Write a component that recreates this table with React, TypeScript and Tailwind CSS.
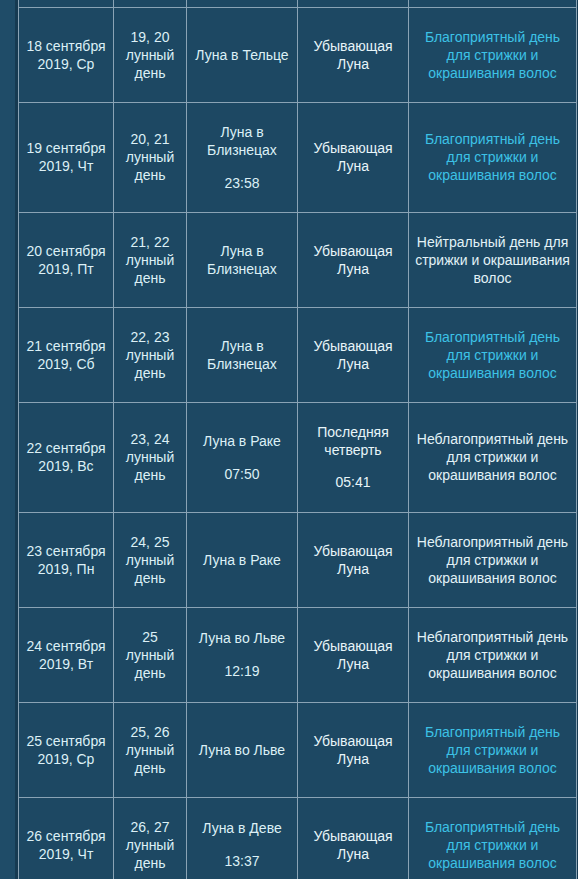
type Row = {
  date: string[];
  days: string;
  moon: string;
  moonTime?: string;
  phase: string[];
  phaseTime?: string;
  verdict: "good" | "bad" | "neutral";
  tall?: boolean;
};

const rows: Row[] = [
  { date: ["18 сентября", "2019, Ср"], days: "19, 20", moon: "Луна в Тельце", phase: ["Убывающая", "Луна"], verdict: "good" },
  { date: ["19 сентября", "2019, Чт"], days: "20, 21", moon: "Луна в Близнецах", moonTime: "23:58", phase: ["Убывающая", "Луна"], verdict: "good", tall: true },
  { date: ["20 сентября", "2019, Пт"], days: "21, 22", moon: "Луна в Близнецах", phase: ["Убывающая", "Луна"], verdict: "neutral" },
  { date: ["21 сентября", "2019, Сб"], days: "22, 23", moon: "Луна в Близнецах", phase: ["Убывающая", "Луна"], verdict: "good" },
  { date: ["22 сентября", "2019, Вс"], days: "23, 24", moon: "Луна в Раке", moonTime: "07:50", phase: ["Последняя", "четверть"], phaseTime: "05:41", verdict: "bad", tall: true },
  { date: ["23 сентября", "2019, Пн"], days: "24, 25", moon: "Луна в Раке", phase: ["Убывающая", "Луна"], verdict: "bad" },
  { date: ["24 сентября", "2019, Вт"], days: "25", moon: "Луна во Льве", moonTime: "12:19", phase: ["Убывающая", "Луна"], verdict: "bad" },
  { date: ["25 сентября", "2019, Ср"], days: "25, 26", moon: "Луна во Льве", phase: ["Убывающая", "Луна"], verdict: "good" },
  { date: ["26 сентября", "2019, Чт"], days: "26, 27", moon: "Луна в Деве", moonTime: "13:37", phase: ["Убывающая", "Луна"], verdict: "good" },
];

const cell = "border border-[#8aa3b5] px-[5px] py-[18px] text-center align-middle";

function Verdict({ kind }: { kind: Row["verdict"] }) {
  if (kind === "neutral") {
    return <span className="text-[#e2f2f7]">Нейтральный день для стрижки и окрашивания волос</span>;
  }
  if (kind === "bad") {
    return (
      <span className="text-[#e2f2f7]">
        Неблагоприятный день для стрижки и окрашивания волос
      </span>
    );
  }
  return (
    <span className="text-[#3cc2e6]">
      Благоприятный день для стрижки и окрашивания волос
    </span>
  );
}

export default function App() {
  return (
    <div
      className="min-h-screen w-[578px] h-[879px] overflow-hidden bg-[#1d4863] flex text-[14px] leading-[18px] text-[#dcf0f6]"
      style={{ fontFamily: '"Liberation Sans", Arial, sans-serif' }}
    >
      {/* left page edge */}
      <div className="w-[15px] shrink-0 bg-[#1f4c68]" />
      <div className="w-[3px] shrink-0 bg-[#163a51]" />

      <table className="table-fixed border-collapse w-[558px] shrink-0 self-start">
        <colgroup>
          <col className="w-[95px]" />
          <col className="w-[73px]" />
          <col className="w-[111px]" />
          <col className="w-[111px]" />
          <col className="w-[168px]" />
        </colgroup>
        <tbody>
          <tr className="h-[7px]">
            <td className="p-0 border border-t-0 border-[#8aa3b5]" />
            <td className="p-0 border border-t-0 border-[#8aa3b5]" />
            <td className="p-0 border border-t-0 border-[#8aa3b5]" />
            <td className="p-0 border border-t-0 border-[#8aa3b5]" />
            <td className="p-0 border border-t-0 border-[#8aa3b5]" />
          </tr>
          {rows.map((r, i) => (
            <tr key={i} className={r.tall ? "h-[110px]" : "h-[95px]"}>
              <td className={cell}>
                {r.date[0]}
                <br />
                {r.date[1]}
              </td>
              <td className={cell}>
                {r.days}
                <br />
                лунный
                <br />
                день
              </td>
              <td className={cell}>
                <div>{r.moon}</div>
                {r.moonTime && <div className="mt-[15px]">{r.moonTime}</div>}
              </td>
              <td className={cell + " text-[#e8f5f9]"}>
                <div>
                  {r.phase[0]}
                  <br />
                  {r.phase[1]}
                </div>
                {r.phaseTime && <div className="mt-[14px]">{r.phaseTime}</div>}
              </td>
              <td className={cell}>
                <Verdict kind={r.verdict} />
              </td>
            </tr>
          ))}
        </tbody>
      </table>

      <div className="w-[2px] shrink-0 bg-[#163a51]" />
    </div>
  );
}
